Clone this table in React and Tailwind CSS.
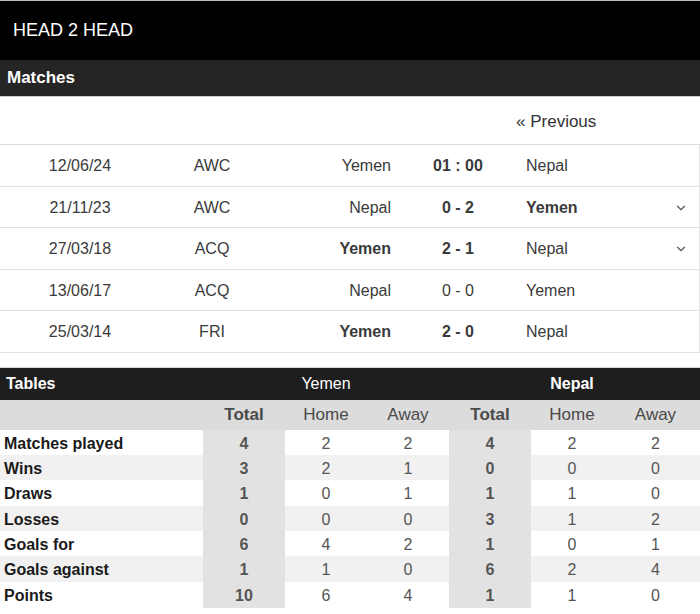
import { ChevronDown } from "lucide-react";

const MATCHES = [
  { date: "12/06/24", comp: "AWC", home: "Yemen", score: "01 : 00", away: "Nepal", hb: false, sb: true, ab: false, more: false },
  { date: "21/11/23", comp: "AWC", home: "Nepal", score: "0 - 2", away: "Yemen", hb: false, sb: true, ab: true, more: true },
  { date: "27/03/18", comp: "ACQ", home: "Yemen", score: "2 - 1", away: "Nepal", hb: true, sb: true, ab: false, more: true },
  { date: "13/06/17", comp: "ACQ", home: "Nepal", score: "0 - 0", away: "Yemen", hb: false, sb: false, ab: false, more: false },
  { date: "25/03/14", comp: "FRI", home: "Yemen", score: "2 - 0", away: "Nepal", hb: true, sb: true, ab: false, more: false },
];

const STATS = [
  { label: "Matches played", v: [4, 2, 2, 4, 2, 2] },
  { label: "Wins", v: [3, 2, 1, 0, 0, 0] },
  { label: "Draws", v: [1, 0, 1, 1, 1, 0] },
  { label: "Losses", v: [0, 0, 0, 3, 1, 2] },
  { label: "Goals for", v: [6, 4, 2, 1, 0, 1] },
  { label: "Goals against", v: [1, 1, 0, 6, 2, 4] },
  { label: "Points", v: [10, 6, 4, 1, 1, 0] },
];

const COLS = "grid grid-cols-[203px_82px_82px_82px_82px_82px_85px]";

function MatchRow({ m }) {
  return (
    <div className="grid h-[41.5px] grid-cols-[160px_104px_127px_134px_139px_34px] items-center border-b border-r border-[#e2e2e2] pt-[2px] text-[16px] text-[#3a3a3a]">
      <div className="text-center">{m.date}</div>
      <div className="text-center">{m.comp}</div>
      <div className={`text-right ${m.hb ? "font-bold" : ""}`}>{m.home}</div>
      <div className={`text-center ${m.sb ? "font-bold" : ""}`}>{m.score}</div>
      <div className={`pl-[1px] ${m.ab ? "font-bold" : ""}`}>{m.away}</div>
      <div className="flex justify-center text-[#555]">
        {m.more && <ChevronDown size={14} strokeWidth={2} />}
      </div>
    </div>
  );
}

export default function App() {
  return (
    <div className="w-[700px] h-[614px] bg-white font-['Liberation_Sans',Arial,sans-serif] overflow-hidden">
      <div className="h-[1px] bg-[#bdbdbd]" />
      <div className="flex h-[59px] items-center bg-black pl-[13px] text-[18px] text-white">
        HEAD 2 HEAD
      </div>
      <div className="flex h-[37px] items-center border-b border-[#cfcfcf] bg-[#252525] pl-[7px] text-[17px] font-bold text-white">
        Matches
      </div>
      <div className="flex h-[48px] items-center border-b border-[#dcdcdc] pl-[516px] pt-[2px] text-[17px] text-[#333]">
        « Previous
      </div>
      {MATCHES.map((m) => (
        <MatchRow key={m.date} m={m} />
      ))}
      <div className="h-[15px] border-b border-[#d6d6d6]" />
      <div className={`${COLS} h-[32px] items-center bg-[#1e1e1e] text-[16px] text-white`}>
        <div className="pl-[6px] font-bold">Tables</div>
        <div />
        <div className="text-center">Yemen</div>
        <div />
        <div />
        <div className="text-center font-bold">Nepal</div>
        <div />
      </div>
      <div className={`${COLS} h-[30px] items-center bg-[#dcdcdc] pt-[1px] text-[17px] text-[#4a4a4a]`}>
        <div />
        <div className="text-center font-bold">Total</div>
        <div className="text-center">Home</div>
        <div className="text-center">Away</div>
        <div className="text-center font-bold">Total</div>
        <div className="text-center">Home</div>
        <div className="text-center">Away</div>
      </div>
      {STATS.map((s, i) => (
        <div
          key={s.label}
          className={`${COLS} h-[25.4px] text-[16px] ${i % 2 === 1 ? "bg-[#f1f1f1]" : "bg-white"}`}
        >
          <div className="flex items-center pl-[4px] pt-[2px] font-bold text-[#1a1a1a]">{s.label}</div>
          {s.v.map((n, j) => (
            <div
              key={j}
              className={`flex items-center justify-center pt-[2px] ${
                j === 0 || j === 3 ? "bg-[#e2e2e2] font-bold text-[#555]" : "text-[#555]"
              }`}
            >
              {n}
            </div>
          ))}
        </div>
      ))}
    </div>
  );
}
